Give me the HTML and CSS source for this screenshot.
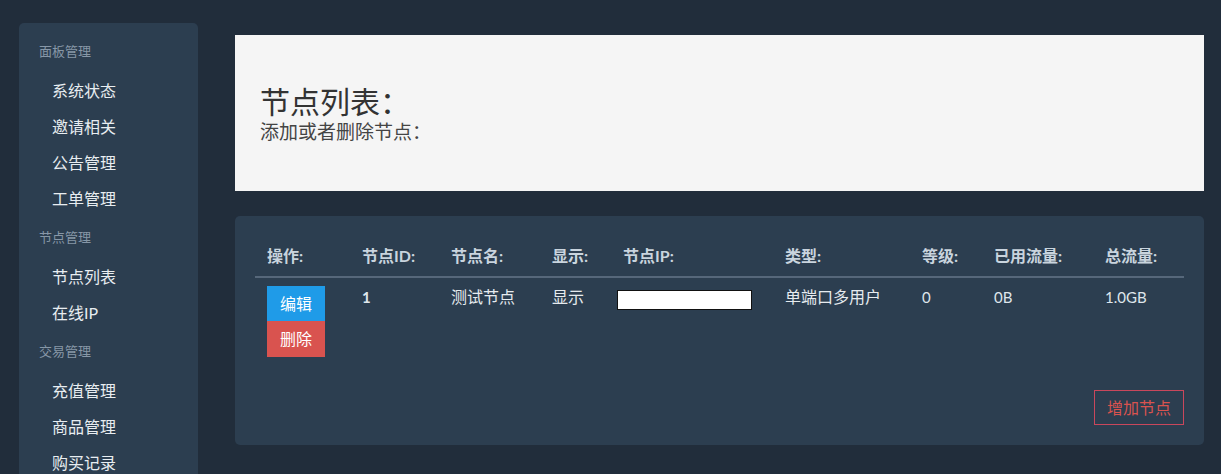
FILE: index.html
```html
<!DOCTYPE html>
<html lang="zh-CN">
<head>
<meta charset="utf-8">
<title>节点列表</title>
<link rel="stylesheet" href="styles.css">
</head>
<body>
<div class="layout">
  <aside class="sidebar">
    <div class="cat">面板管理</div>
    <a class="item">系统状态</a>
    <a class="item">邀请相关</a>
    <a class="item">公告管理</a>
    <a class="item">工单管理</a>
    <div class="cat">节点管理</div>
    <a class="item">节点列表</a>
    <a class="item">在线IP</a>
    <div class="cat">交易管理</div>
    <a class="item">充值管理</a>
    <a class="item">商品管理</a>
    <a class="item">购买记录</a>
  </aside>
  <main class="main">
    <section class="jumbo">
      <h1 class="title">节点列表：</h1>
      <p class="subtitle">添加或者删除节点：</p>
    </section>
    <section class="card">
      <table class="nodes">
        <colgroup>
          <col class="c1"><col class="c2"><col class="c3"><col class="c4"><col class="c5"><col class="c6"><col class="c7"><col class="c8"><col class="c9">
        </colgroup>
        <thead>
          <tr>
            <th>操作:</th><th>节点ID:</th><th>节点名:</th><th>显示:</th><th>节点IP:</th><th>类型:</th><th>等级:</th><th>已用流量:</th><th>总流量:</th>
          </tr>
        </thead>
        <tbody>
          <tr>
            <td><div class="ops"><a class="btn edit">编辑</a><a class="btn del">删除</a></div></td>
            <td class="num strong">1</td>
            <td>测试节点</td>
            <td>显示</td>
            <td><input class="ip" type="text" value=""></td>
            <td>单端口多用户</td>
            <td class="num">0</td>
            <td class="num">0B</td>
            <td class="num">1.0GB</td>
          </tr>
        </tbody>
      </table>
      <div class="actions"><a class="add">增加节点</a></div>
    </section>
  </main>
</div>
</body>
</html>
```

FILE: styles.css
```css
* { box-sizing: border-box; }
html, body { margin: 0; padding: 0; }
body {
  background: #212d3b;
  font-family: "Lato", "Noto Sans CJK SC", sans-serif;
  color: #e6ebef;
  height: 474px;
  overflow: hidden;
}
.layout {
  display: flex;
  align-items: flex-start;
  padding: 23px 17px 0 19px;
}
.sidebar {
  width: 179px;
  flex: 0 0 179px;
  background: #2c3e50;
  border-radius: 5px 5px 0 0;
  padding-top: 8px;
  height: 451px;
  overflow: hidden;
}
.cat {
  font-size: 13px;
  color: #8797a7;
  line-height: 40px;
  padding: 0 0 2px 20px;
}
.item {
  display: block;
  font-size: 16px;
  line-height: 36px;
  color: #e8edf1;
  padding-left: 33px;
}
.main {
  flex: 1;
  margin-left: 37px;
  padding-top: 12px;
}
.jumbo {
  background: #f5f5f5;
  padding: 48px 25px 46px;
  color: #333;
}
.title {
  margin: 0;
  font-size: 30px;
  font-weight: normal;
  line-height: 36px;
}
.subtitle {
  margin: 0;
  font-size: 19px;
  line-height: 26px;
  color: #444;
}
.card {
  margin-top: 25px;
  background: #2c3e50;
  border-radius: 5px;
  padding: 20px 20px 20px;
}
.nodes {
  width: 100%;
  border-collapse: collapse;
  table-layout: fixed;
}
.c1 { width: 95px; }
.c2 { width: 89px; }
.c3 { width: 101px; }
.c4 { width: 71px; }
.c5 { width: 162px; }
.c6 { width: 137px; }
.c7 { width: 72px; }
.c8 { width: 111px; }
.c9 { width: 91px; }
.nodes th {
  text-align: left;
  font-size: 16px;
  font-weight: bold;
  color: #c9d4de;
  line-height: 22px;
  padding: 9px 12px 9px;
  border-bottom: 2px solid #56677a;
  white-space: nowrap;
}
.nodes td {
  vertical-align: top;
  font-size: 16px;
  line-height: 22px;
  padding: 8px 12px 8px;
  color: #e6ebef;
  white-space: nowrap;
}
.nodes td.num { color: #dfe6ec; font-size: 15px; }
.nodes td.strong { font-weight: bold; }
.ops { display: flex; flex-direction: column; width: 58px; }
.btn {
  display: block;
  height: 35px;
  line-height: 35px;
  text-align: center;
  font-size: 16px;
  color: #fff;
}
.edit { background: #1f9be8; }
.del { background: #d9534f; height: 36px; }
.ip {
  display: block;
  margin: 4px 0 0 -6px;
  width: 135px;
  height: 20px;
  border: 1px solid #111;
  background: #fff;
  padding: 0;
}
.actions {
  display: flex;
  justify-content: flex-end;
  margin-top: 25px;
}
.add {
  display: block;
  width: 90px;
  height: 35px;
  line-height: 33px;
  text-align: center;
  border: 1px solid #c9475c;
  color: #d9534f;
  font-size: 16px;
}
```
